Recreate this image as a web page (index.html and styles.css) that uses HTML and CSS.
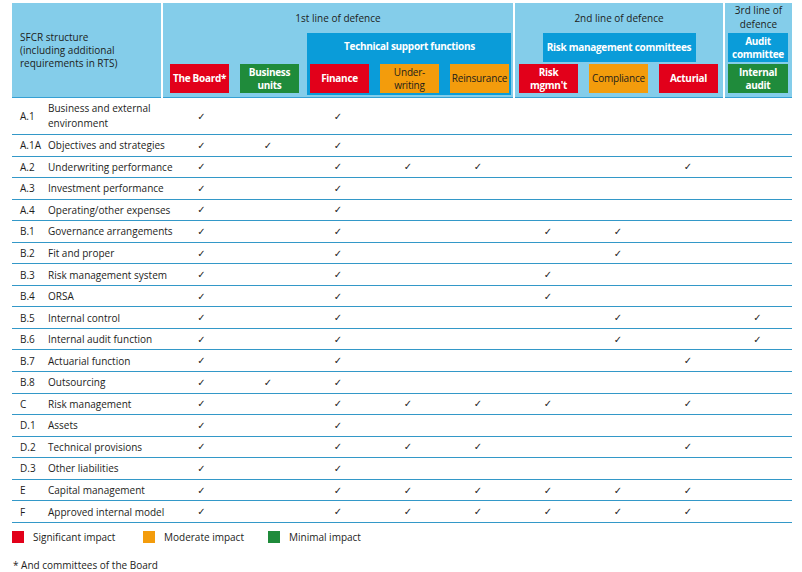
FILE: index.html
```html
<!DOCTYPE html>
<html>
<head>
<meta charset="utf-8">
<link rel="stylesheet" href="styles.css">
</head>
<body>
<div class="page">
  <div class="head">
    <div class="panel p1">SFCR structure<br>(including additional<br>requirements in RTS)</div>
    <div class="panel p2">
      <div class="ptitle">1st line of defence</div>
      <div class="p2body">
        <div class="box red">The Board*</div>
        <div class="box green">Business<br>units</div>
        <div class="tech">
          <div class="techtitle">Technical support functions</div>
          <div class="boxrow">
            <div class="box red">Finance</div>
            <div class="box orange">Under-<br>writing</div>
            <div class="box orange">Reinsurance</div>
          </div>
        </div>
      </div>
    </div>
    <div class="panel p3">
      <div class="ptitle">2nd line of defence</div>
      <div class="committee">Risk management committees</div>
      <div class="boxrow r3">
        <div class="box red">Risk<br>mgmn't</div>
        <div class="box orange">Compliance</div>
        <div class="box red">Acturial</div>
      </div>
    </div>
    <div class="panel p4">
      <div class="ptitle two">3rd line of<br>defence</div>
      <div class="box blue">Audit<br>committee</div>
      <div class="box green">Internal<br>audit</div>
    </div>
  </div>

  <div class="row tall"><span>A.1</span><span class="lbl">Business and external<br>environment</span><span class="c">✓</span><span></span><span class="c">✓</span><span></span><span></span><span></span><span></span><span></span><span></span></div>
  <div class="row"><span>A.1A</span><span class="lbl">Objectives and strategies</span><span class="c">✓</span><span class="c">✓</span><span class="c">✓</span><span></span><span></span><span></span><span></span><span></span><span></span></div>
  <div class="row"><span>A.2</span><span class="lbl">Underwriting performance</span><span class="c">✓</span><span></span><span class="c">✓</span><span class="c">✓</span><span class="c">✓</span><span></span><span></span><span class="c">✓</span><span></span></div>
  <div class="row"><span>A.3</span><span class="lbl">Investment performance</span><span class="c">✓</span><span></span><span class="c">✓</span><span></span><span></span><span></span><span></span><span></span><span></span></div>
  <div class="row"><span>A.4</span><span class="lbl">Operating/other expenses</span><span class="c">✓</span><span></span><span class="c">✓</span><span></span><span></span><span></span><span></span><span></span><span></span></div>
  <div class="row"><span>B.1</span><span class="lbl">Governance arrangements</span><span class="c">✓</span><span></span><span class="c">✓</span><span></span><span></span><span class="c">✓</span><span class="c">✓</span><span></span><span></span></div>
  <div class="row"><span>B.2</span><span class="lbl">Fit and proper</span><span class="c">✓</span><span></span><span class="c">✓</span><span></span><span></span><span></span><span class="c">✓</span><span></span><span></span></div>
  <div class="row"><span>B.3</span><span class="lbl">Risk management system</span><span class="c">✓</span><span></span><span class="c">✓</span><span></span><span></span><span class="c">✓</span><span></span><span></span><span></span></div>
  <div class="row"><span>B.4</span><span class="lbl">ORSA</span><span class="c">✓</span><span></span><span class="c">✓</span><span></span><span></span><span class="c">✓</span><span></span><span></span><span></span></div>
  <div class="row"><span>B.5</span><span class="lbl">Internal control</span><span class="c">✓</span><span></span><span class="c">✓</span><span></span><span></span><span></span><span class="c">✓</span><span></span><span class="c">✓</span></div>
  <div class="row"><span>B.6</span><span class="lbl">Internal audit function</span><span class="c">✓</span><span></span><span class="c">✓</span><span></span><span></span><span></span><span class="c">✓</span><span></span><span class="c">✓</span></div>
  <div class="row"><span>B.7</span><span class="lbl">Actuarial function</span><span class="c">✓</span><span></span><span class="c">✓</span><span></span><span></span><span></span><span></span><span class="c">✓</span><span></span></div>
  <div class="row"><span>B.8</span><span class="lbl">Outsourcing</span><span class="c">✓</span><span class="c">✓</span><span class="c">✓</span><span></span><span></span><span></span><span></span><span></span><span></span></div>
  <div class="row"><span>C</span><span class="lbl">Risk management</span><span class="c">✓</span><span></span><span class="c">✓</span><span class="c">✓</span><span class="c">✓</span><span class="c">✓</span><span></span><span class="c">✓</span><span></span></div>
  <div class="row"><span>D.1</span><span class="lbl">Assets</span><span class="c">✓</span><span></span><span class="c">✓</span><span></span><span></span><span></span><span></span><span></span><span></span></div>
  <div class="row"><span>D.2</span><span class="lbl">Technical provisions</span><span class="c">✓</span><span></span><span class="c">✓</span><span class="c">✓</span><span class="c">✓</span><span></span><span></span><span class="c">✓</span><span></span></div>
  <div class="row"><span>D.3</span><span class="lbl">Other liabilities</span><span class="c">✓</span><span></span><span class="c">✓</span><span></span><span></span><span></span><span></span><span></span><span></span></div>
  <div class="row"><span>E</span><span class="lbl">Capital management</span><span class="c">✓</span><span></span><span class="c">✓</span><span class="c">✓</span><span class="c">✓</span><span class="c">✓</span><span class="c">✓</span><span class="c">✓</span><span></span></div>
  <div class="row"><span>F</span><span class="lbl">Approved internal model</span><span class="c">✓</span><span></span><span class="c">✓</span><span class="c">✓</span><span class="c">✓</span><span class="c">✓</span><span class="c">✓</span><span class="c">✓</span><span></span></div>

  <div class="legend">
    <div class="lg"><span class="sq red"></span>Significant impact</div>
    <div class="lg"><span class="sq orange"></span>Moderate impact</div>
    <div class="lg"><span class="sq green"></span>Minimal impact</div>
  </div>
  <div class="foot">* And committees of the Board</div>
</div>
</body>
</html>
```

FILE: styles.css
```css
* { box-sizing: border-box; margin: 0; padding: 0; }
body {
  margin: 0;
  background: #ffffff;
  font-family: "Open Sans", "Liberation Sans", sans-serif;
  font-size: 10px;
  color: #1d1d1b;
}
.page { padding: 3px 0 0 12px; width: 802px; }

.head { display: flex; gap: 2px; width: 780px; }
.panel {
  background: #84cdea;
  height: 95px;
  border-bottom: 1px solid #35a0d4;
  display: flex;
  flex-direction: column;
}
.p1 { width: 149px; padding: 28px 0 0 8px; line-height: 13px; font-size: 10px; display: block; }
.p2 { width: 350px; }
.p3 { width: 208px; }
.p4 { width: 67px; padding-left: 3px; }

.ptitle { height: 30px; line-height: 30px; text-align: center; font-size: 10px; }
.ptitle.two { line-height: 14px; padding-right: 3px; }

.p2body {
  display: flex;
  align-items: flex-end;
  height: 64px;
  padding: 0 2px 2px 7px;
}
.p2body > .box { margin-bottom: 2px; }
.p2body > .box + .box { margin-left: 11px; }

.tech {
  margin-left: 8px;
  width: 204px;
  height: 62px;
  background: #0a9cd9;
  padding: 0 2px 2px 3px;
  display: flex;
  flex-direction: column;
}
.techtitle {
  height: 31px;
  line-height: 27px;
  text-align: center;
  color: #ffffff;
  font-weight: bold;
  letter-spacing: -0.3px;
}
.boxrow { display: flex; gap: 11px; }
.r3 { margin-top: 2px; padding-left: 4px; }

.box {
  width: 59px;
  height: 29px;
  display: flex;
  align-items: center;
  justify-content: center;
  text-align: center;
  line-height: 13px;
  color: #ffffff;
  font-weight: bold;
  font-size: 10px;
  letter-spacing: -0.3px;
}
.p4 .box { width: 60px; }
.p4 .box + .box { margin-top: 2px; }

.red { background: #e2001a; }
.green { background: #1f8b3b; }
.orange { background: #f39c0c; }
.blue { background: #0a9cd9; }
.box.orange { color: #1d1d1b; font-weight: normal; letter-spacing: -0.2px; }

.committee {
  width: 153px;
  height: 29px;
  margin: 0 auto;
  background: #0a9cd9;
  color: #ffffff;
  font-weight: bold;
  text-align: center;
  line-height: 29px;
  letter-spacing: -0.3px;
}

.row {
  display: grid;
  grid-template-columns: 28px 115px repeat(8, 70px) 69px;
  align-items: center;
  width: 780px;
  height: 21.56px;
  padding-left: 8px;
  border-bottom: 1px solid #3398c8;
  font-size: 10px;
}
.lbl { white-space: nowrap; }
.row.tall { height: 37px; }
.row.tall .lbl { line-height: 15px; }
.c {
  text-align: center;
  font-family: "DejaVu Sans", sans-serif;
  font-size: 10px;
  color: #222222;
}
.row > :nth-child(3) { padding-left: 7px; }

.legend {
  display: grid;
  grid-template-columns: 131px 125px auto;
  margin-top: 7px;
  font-size: 10px;
}
.lg { display: flex; align-items: center; gap: 9px; height: 14px; }
.sq { display: block; width: 12px; height: 12px; }
.foot { margin-top: 14px; padding-left: 1px; font-size: 10px; line-height: 14px; }
```
